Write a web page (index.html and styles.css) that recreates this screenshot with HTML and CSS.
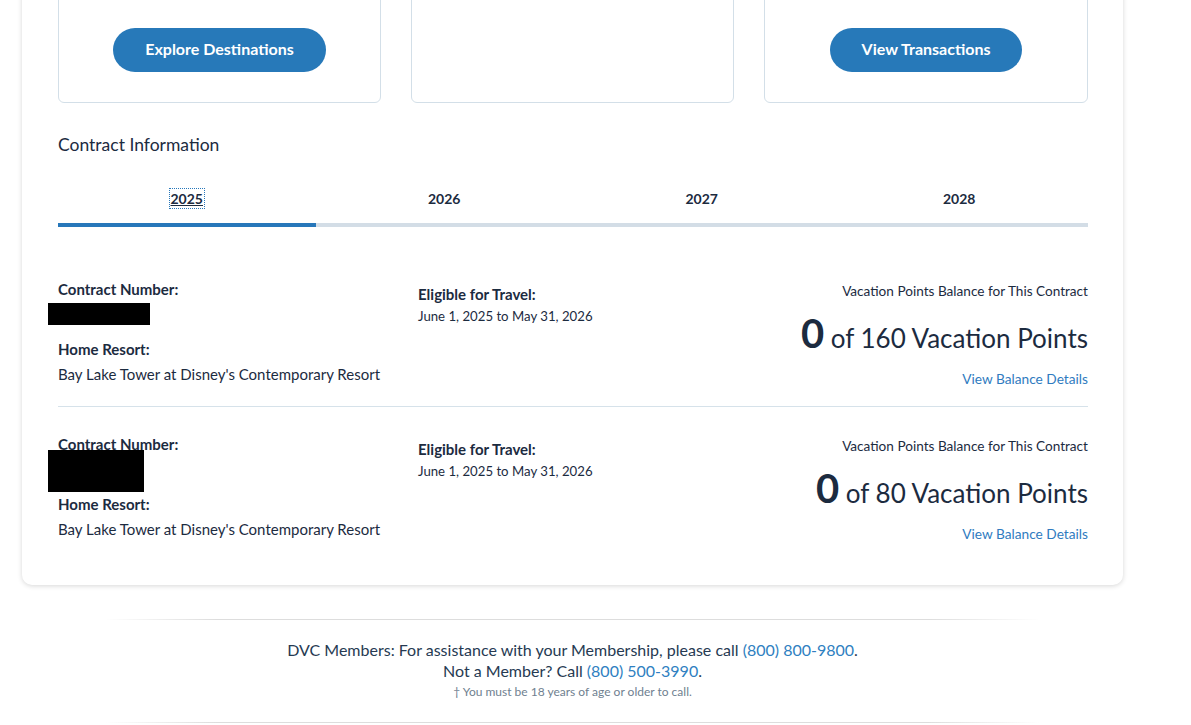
FILE: index.html
```html
<!DOCTYPE html>
<html lang="en">
<head>
<meta charset="utf-8">
<title>Contract Information</title>
<link rel="stylesheet" href="styles.css">
</head>
<body>
<div class="page">
  <main class="panel">
    <section class="top-cards">
      <div class="mini-card"><a class="btn" href="#">Explore Destinations</a></div>
      <div class="mini-card"></div>
      <div class="mini-card"><a class="btn" href="#">View Transactions</a></div>
    </section>

    <h2 class="section-title">Contract Information</h2>

    <nav class="tabs">
      <button class="tab active"><span class="tab-label">2025</span></button>
      <button class="tab"><span class="tab-label">2026</span></button>
      <button class="tab"><span class="tab-label">2027</span></button>
      <button class="tab"><span class="tab-label">2028</span></button>
    </nav>

    <div class="contracts">
      <div class="contract first">
        <div class="col col-left">
          <div class="label">Contract Number:</div>
          <div class="redact r1"></div>
          <div class="label home">Home Resort:</div>
          <div class="value">Bay Lake Tower at Disney's Contemporary Resort</div>
        </div>
        <div class="col col-mid">
          <div class="label">Eligible for Travel:</div>
          <div class="small">June 1, 2025 to May 31, 2026</div>
        </div>
        <div class="col col-right">
          <div class="small balance-label">Vacation Points Balance for This Contract</div>
          <div class="points"><span class="big">0</span> of 160 Vacation Points</div>
          <a class="link" href="#">View Balance Details</a>
        </div>
      </div>
      <div class="contract second">
        <div class="col col-left">
          <div class="label">Contract Number:</div>
          <div class="redact r2"></div>
          <div class="label home">Home Resort:</div>
          <div class="value">Bay Lake Tower at Disney's Contemporary Resort</div>
        </div>
        <div class="col col-mid">
          <div class="label">Eligible for Travel:</div>
          <div class="small">June 1, 2025 to May 31, 2026</div>
        </div>
        <div class="col col-right">
          <div class="small balance-label">Vacation Points Balance for This Contract</div>
          <div class="points"><span class="big">0</span> of 80 Vacation Points</div>
          <a class="link" href="#">View Balance Details</a>
        </div>
      </div>
    </div>
  </main>

  <footer class="footer">
    <div class="rule"></div>
    <p class="f-line">DVC Members: For assistance with your Membership, please call <a href="#">(800) 800-9800</a>.</p>
    <p class="f-line">Not a Member? Call <a href="#">(800) 500-3990</a>.</p>
    <p class="f-note">† You must be 18 years of age or older to call.</p>
    <div class="rule bottom"></div>
  </footer>
</div>
</body>
</html>
```

FILE: styles.css
```css
* { box-sizing: border-box; }

html, body {
  margin: 0;
  padding: 0;
  background: #ffffff;
  overflow: hidden;
}

body {
  font-family: Lato, "Open Sans", "Liberation Sans", sans-serif;
  color: #1c2b3f;
}

.page {
  width: 1101px;
  margin: -89px 0 0 22px;
}

.panel {
  background: #fff;
  border-radius: 10px;
  box-shadow: 0 1px 5px rgba(0, 0, 0, 0.16);
  padding: 32px 35px 22px 36px;
}

.top-cards {
  display: grid;
  grid-template-columns: 323px 323px 324px;
  column-gap: 30px;
}

.mini-card {
  height: 160px;
  border: 1px solid #d3dfe8;
  border-radius: 6px;
  display: flex;
  flex-direction: column;
  justify-content: flex-end;
  align-items: center;
  padding-bottom: 30px;
}

.btn {
  display: inline-flex;
  align-items: center;
  justify-content: center;
  height: 44px;
  padding: 0 32px 3px;
  border-radius: 22px;
  background: #2779b9;
  color: #fff;
  font-weight: 700;
  font-size: 16px;
  text-decoration: none;
}

.section-title {
  margin: 30px 0 0;
  font-size: 17.5px;
  line-height: 24px;
  font-weight: 400;
  color: #1c2b3f;
}

.tabs {
  display: grid;
  grid-template-columns: repeat(4, 1fr);
  margin-top: 32px;
}

.tab {
  appearance: none;
  background: none;
  border: 0;
  border-bottom: 4px solid #d3dde6;
  padding: 0 0 14px;
  margin: 0;
  font-family: inherit;
  font-size: 14px;
  line-height: 20px;
  font-weight: 700;
  color: #1c2b3f;
  cursor: pointer;
}

.tab.active {
  border-bottom-color: #2777ba;
}

.tab.active .tab-label {
  text-decoration: underline;
  outline: 1px dotted #2777ba;
  outline-offset: 1px;
}

.contract {
  display: grid;
  grid-template-columns: 360px 1fr 1fr;
}

.contract.first {
  padding: 52px 0 18px;
  border-bottom: 1px solid #d6e2ea;
}

.contract.second {
  padding: 27px 0 20px;
}

.label {
  font-size: 15px;
  line-height: 20px;
  font-weight: 700;
  color: #1c2b3f;
}

.value {
  font-size: 15px;
  line-height: 20px;
  margin-top: 5px;
}

.redact {
  background: #000;
  margin-left: -10px;
}

.redact.r1 {
  width: 102px;
  height: 22px;
  margin-top: 4px;
}

.redact.r2 {
  width: 96px;
  height: 42px;
  margin-top: -4px;
  position: relative;
}

.r1 + .home { margin-top: 14px; }
.r2 + .home { margin-top: 2px; }

.col-mid {
  padding-top: 5px;
}

.col-mid .small {
  margin-top: 3px;
}

.small {
  font-size: 13.2px;
  line-height: 18px;
}

.col-right {
  text-align: right;
  padding-top: 3px;
}

.balance-label {
  font-size: 13.6px;
}

.points {
  margin-top: 18px;
  font-size: 26px;
  line-height: 40px;
  color: #1c2b3f;
}

.points .big {
  font-size: 40px;
  line-height: 0;
  font-weight: 700;
}

.link {
  display: inline-block;
  margin-top: 12px;
  font-size: 13.7px;
  line-height: 18px;
  color: #2f7bc0;
  text-decoration: none;
}

.footer {
  margin-top: 34px;
  text-align: center;
}

.rule {
  width: 935px;
  height: 1px;
  margin: 0 auto;
  background: linear-gradient(90deg, rgba(221,221,221,0) 0%, #dddddd 12%, #dddddd 88%, rgba(221,221,221,0) 100%);
}

.f-line {
  margin: 0;
  font-size: 16px;
  line-height: 21px;
  color: #263a52;
}

.f-line:first-of-type {
  margin-top: 19px;
}

.f-line a {
  color: #2f7fc1;
  text-decoration: none;
}

.f-note {
  margin: 2px 0 0;
  font-size: 12px;
  line-height: 18px;
  color: #6f7f90;
}

.rule.bottom {
  margin-top: 21px;
}
```
